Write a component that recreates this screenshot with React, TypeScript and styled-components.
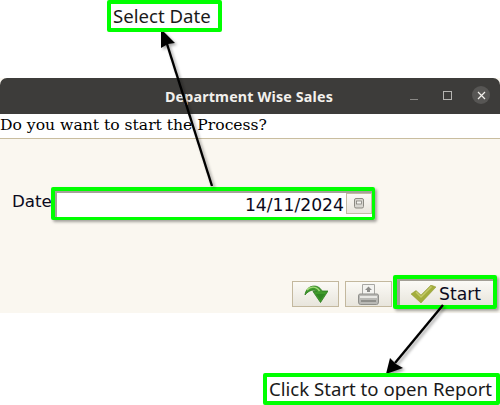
import React from "react";
import styled, { createGlobalStyle } from "styled-components";

const GlobalStyle = createGlobalStyle`
	html, body {
		margin: 0;
		padding: 0;
		background: #ffffff;
	}
`;

const Page = styled.div`
	position: relative;
	width: 500px;
	height: 405px;
	overflow: hidden;
	padding-top: 78px;
	box-sizing: border-box;
	background: #ffffff;
`;

const Window = styled.div`
	width: 500px;
	height: 235px;
	display: flex;
	flex-direction: column;
	background: #faf7f0;
`;

const TitleBar = styled.div`
	height: 36px;
	flex: none;
	position: relative;
	display: flex;
	align-items: center;
	justify-content: center;
	background: #3d3c3a;
	border-radius: 7px 7px 0 0;
	color: #f2f0ec;
	font: bold 14.3px "Noto Sans", sans-serif;
	letter-spacing: 0.15px;
`;

const Title = styled.span`
	margin-left: -2px;
`;

const WindowControls = styled.div`
	position: absolute;
	right: 10px;
	top: 8px;
	display: flex;
	align-items: center;
`;

const MinimizeIcon = styled.svg`
	margin-right: 25px;
`;

const MaximizeIcon = styled.svg`
	margin-right: 20px;
`;

const CloseCircle = styled.div`
	width: 18px;
	height: 18px;
	border-radius: 50%;
	background: #575654;
	display: flex;
	align-items: center;
	justify-content: center;
`;

const Message = styled.div`
	height: 25px;
	flex: none;
	box-sizing: border-box;
	background: #ffffff;
	border-bottom: 1px solid #c9bd9f;
	color: #000000;
	font: 15.6px/22px "DejaVu Serif", serif;
	white-space: nowrap;
`;

const DateRow = styled.div`
	display: flex;
	align-items: center;
	margin-top: 48px;
	padding-left: 12px;
`;

const DateLabel = styled.label`
	width: 39px;
	margin-top: -5px;
	color: #0a0a20;
	font: 16.7px "DejaVu Sans", sans-serif;
`;

const DateBox = styled.div`
	width: 324px;
	height: 33px;
	box-sizing: border-box;
	border-style: solid;
	border-color: #00ff00;
	border-width: 4px 3px 3px 4px;
	border-radius: 2px;
	box-shadow: 2px 2px 3px rgba(0, 0, 0, 0.35);
	display: flex;
`;

const DateInner = styled.div`
	flex: 1;
	display: flex;
	align-items: stretch;
	box-sizing: border-box;
	background: #ffffff;
	border-top: 2px solid #a5a19a;
	border-left: 2px solid #a5a19a;
`;

const DateField = styled.div`
	flex: 1;
	text-align: right;
	color: #0a0a20;
	font: 17.2px/24px "DejaVu Sans", sans-serif;
	white-space: nowrap;
	padding-right: 2px;
`;

const CalendarButton = styled.div`
	width: 26px;
	height: 21px;
	box-sizing: border-box;
	display: flex;
	align-items: center;
	justify-content: center;
	background: linear-gradient(#fbf9f5, #e9e5dd);
	border: 1px solid #c3baa4;
`;

const ButtonRow = styled.div`
	margin-top: auto;
	display: flex;
	justify-content: flex-end;
	align-items: flex-end;
	padding: 0 3px 4px 0;
`;

const IconButton = styled.button`
	width: 47px;
	height: 26px;
	margin: 0 6px 2px 0;
	padding: 0;
	display: flex;
	align-items: center;
	justify-content: center;
	background: linear-gradient(#fbfaf6, #e8e5dc);
	border: 1px solid #c3b89e;
`;

const StartFrame = styled.div`
	width: 104px;
	height: 34px;
	margin-left: -5px;
	box-sizing: border-box;
	border: 4px solid #00ff00;
	border-radius: 2px;
	box-shadow: 2px 2px 3px rgba(0, 0, 0, 0.35);
	display: flex;
`;

const StartButton = styled.button`
	flex: 1;
	padding: 2px 0 0 11px;
	display: flex;
	align-items: center;
	gap: 3px;
	background: linear-gradient(#fbfaf6, #e8e5dc);
	border: none;
	border-top: 2px solid #a29e95;
	border-left: 3px solid #a29e95;
	color: #0a0a20;
	font: 17.2px "DejaVu Sans", sans-serif;
`;

const Callout = styled.div<{ $left: number; $top: number; $width: number }>`
	position: absolute;
	left: ${(p) => p.$left}px;
	top: ${(p) => p.$top}px;
	width: ${(p) => p.$width}px;
	height: 32px;
	box-sizing: border-box;
	border: 4px solid #00ff00;
	border-radius: 2px;
	background: #ffffff;
	padding-left: 2px;
	color: #1a1a1a;
	font: 18.6px/24px "Noto Sans", sans-serif;
	white-space: nowrap;
`;

const ArrowLayer = styled.svg`
	position: absolute;
	left: 0;
	top: 0;
	pointer-events: none;
`;

function RedoIcon() {
	return (
		<svg width="24" height="21" viewBox="0 0 24 21">
			<path
				d="M1 11 C2 1 14 -1 18 7 L24 7 L16.5 18.5 L9 7.5 L12.5 7.5 C10 5 5 6 1 11 Z"
				fill="#3f9a2c"
				stroke="#2c7a1e"
				strokeWidth="0.8"
			/>
			<path d="M3 6 C6 2.5 12 1.5 15.5 7" fill="none" stroke="#a4dc7a" strokeWidth="1.4" />
			<path d="M12 10 H21 L16.5 16 Z" fill="#2f8622" />
		</svg>
	);
}

function PrintIcon() {
	return (
		<svg width="21" height="21" viewBox="0 0 21 21">
			<path d="M4.5 0.5 H16.5 V11 H4.5 Z" fill="#f3f3f0" stroke="#a8a8a4" />
			<path d="M10.5 2.5 L14 6 H12 V8 H9 V6 H7 Z" fill="#8d8d8a" />
			<path d="M2 10 H19 Q20.5 10 20.5 12 V18 Q20.5 20.5 18.5 20.5 H2.5 Q0.5 20.5 0.5 18 V12 Q0.5 10 2 10 Z" fill="#b9b9b5" stroke="#8f8f8b" />
			<path d="M2 13 H19" stroke="#e8e8e4" strokeWidth="2" />
			<path d="M3 17 H18" stroke="#8f8f8b" strokeWidth="2" />
		</svg>
	);
}

function CheckIcon() {
	return (
		<svg width="25" height="18" viewBox="0 0 25 18">
			<path d="M0 9 L5 5.5 L10 10 L20 0 L25 2 L10 18 Z" fill="#a3ad3c" stroke="#8b962c" strokeWidth="0.5" />
			<path d="M5 7 L10 12 L20.5 1.5" fill="none" stroke="#c2c96a" strokeWidth="1.5" />
		</svg>
	);
}

function CalendarIcon() {
	return (
		<svg width="11" height="11" viewBox="0 0 11 11">
			<rect x="0.5" y="0.5" width="9" height="9.5" rx="1.5" fill="#d8d6d0" stroke="#8b8982" />
			<rect x="2.5" y="3" width="5" height="3" fill="#f4f3ef" stroke="#77756f" strokeWidth="0.7" />
		</svg>
	);
}

export default function App() {
	return (
		<Page>
			<GlobalStyle />
			<Window>
				<TitleBar>
					<Title>Department Wise Sales</Title>
					<WindowControls>
						<MinimizeIcon width="8" height="9" viewBox="0 0 8 9">
							<path d="M0 8.5 H8" stroke="#8a8986" strokeWidth="1" />
						</MinimizeIcon>
						<MaximizeIcon width="9" height="9" viewBox="0 0 9 9">
							<rect x="0.5" y="0.5" width="8" height="8" fill="none" stroke="#b5b4b1" />
						</MaximizeIcon>
						<CloseCircle>
							<svg width="9" height="9" viewBox="0 0 9 9">
								<path d="M1 1 L8 8 M8 1 L1 8" stroke="#f2f0ec" strokeWidth="1.2" />
							</svg>
						</CloseCircle>
					</WindowControls>
				</TitleBar>
				<Message>Do you want to start the Process?</Message>
				<DateRow>
					<DateLabel>Date</DateLabel>
					<DateBox>
						<DateInner>
							<DateField>14/11/2024</DateField>
							<CalendarButton>
								<CalendarIcon />
							</CalendarButton>
						</DateInner>
					</DateBox>
				</DateRow>
				<ButtonRow>
					<IconButton>
						<RedoIcon />
					</IconButton>
					<IconButton>
						<PrintIcon />
					</IconButton>
					<StartFrame>
						<StartButton>
							<CheckIcon />
							Start
						</StartButton>
					</StartFrame>
				</ButtonRow>
			</Window>
			<ArrowLayer width="500" height="405" viewBox="0 0 500 405">
				<defs>
					<filter id="arrowShadow" x="-20%" y="-20%" width="140%" height="140%">
						<feDropShadow dx="2" dy="2" stdDeviation="1.5" floodOpacity="0.35" />
					</filter>
				</defs>
				<g filter="url(#arrowShadow)">
					<path d="M212 186 L167 44" stroke="#000" strokeWidth="2.4" fill="none" />
					<path d="M161 29 L175 43 L168 44 L161 48 Z" fill="#000" />
					<path d="M443 305 L395 363" stroke="#000" strokeWidth="2.4" fill="none" />
					<path d="M386 374 L390 358 L396 364 L403 368 Z" fill="#000" />
				</g>
			</ArrowLayer>
			<Callout $left={107} $top={0} $width={115}>
				Select Date
			</Callout>
			<Callout $left={263} $top={373} $width={237}>
				Click Start to open Report
			</Callout>
		</Page>
	);
}
